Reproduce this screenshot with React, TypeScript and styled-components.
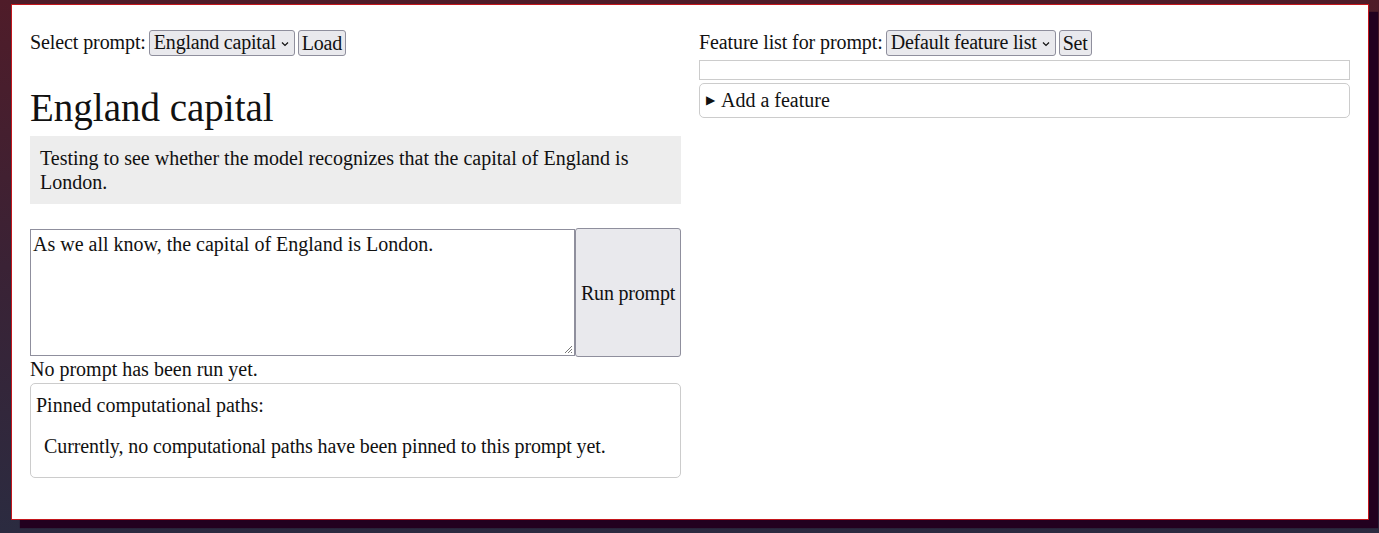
import React from "react";
import styled, { createGlobalStyle } from "styled-components";

const Global = createGlobalStyle`
  html, body { margin: 0; padding: 0; }
  body {
    min-height: 533px;
    background: linear-gradient(180deg, #4f1c29 0%, #3a2235 50%, #2b2b40 100%);
    font-family: "Liberation Serif", "Times New Roman", serif;
    font-size: 20px;
    color: #111;
  }
  #root { padding: 4px 10px 0 11px; }
`;

const Card = styled.div`
  background: #fff;
  border: 1px solid #c3161c;
  box-shadow: 9px 8px 1px #22001f;
  height: 516px;
  box-sizing: border-box;
  padding: 24px 18px 18px 18px;
  display: grid;
  grid-template-columns: 1fr 1fr;
  column-gap: 18px;
  align-items: start;
`;

const Column = styled.div`
  display: flex;
  flex-direction: column;
  min-width: 0;
`;

const Toolbar = styled.div`
  display: flex;
  align-items: center;
  gap: 3px;
  height: 27px;
`;

const Label = styled.span`
  letter-spacing: -0.1px;
`;

const Select = styled.div`
  display: inline-flex;
  align-items: center;
  height: 26px;
  box-sizing: border-box;
  padding: 0 5px 0 4px;
  background: #e9e9ed;
  border: 1px solid #8f8f9d;
  border-radius: 3px;
  gap: 5px;
  white-space: nowrap;
  letter-spacing: -0.2px;
`;

const Chevron = styled.svg`
  width: 8px;
  height: 6px;
  margin-top: 2px;
`;

const Button = styled.button`
  font: inherit;
  color: inherit;
  background: #e9e9ed;
  border: 1px solid #8f8f9d;
  border-radius: 3px;
  padding: 0 3px;
  height: 26px;
  line-height: 1;
  letter-spacing: -0.2px;
`;

const Heading = styled.h1`
  font-size: 39px;
  font-weight: normal;
  margin: 31px 0 0 0;
  line-height: 42px;
`;

const Description = styled.div`
  background: #ededed;
  padding: 10px;
  line-height: 24px;
  margin-top: 7px;
`;

const PromptRow = styled.div`
  display: flex;
  margin-top: 24px;
  align-items: stretch;
`;

const TextArea = styled.div`
  flex: 1;
  height: 127px;
  box-sizing: border-box;
  border: 1px solid #8f8f9d;
  padding: 2px 2px;
  line-height: 24px;
  position: relative;
  margin: 1px 0;
`;

const Grip = styled.svg`
  position: absolute;
  right: 1px;
  bottom: 1px;
  width: 10px;
  height: 10px;
`;

const RunButton = styled(Button)`
  width: 106px;
  height: 129px;
  padding: 0;
`;

const Status = styled.div`
  line-height: 24px;
`;

const PinnedBox = styled.div`
  border: 1px solid #cccccc;
  border-radius: 5px;
  padding: 10px 5px 16px 5px;
  margin-top: 2px;
  height: 95px;
  box-sizing: border-box;
`;

const PinnedText = styled.div`
  line-height: 24px;
  padding-left: 8px;
  margin-top: 17px;
  letter-spacing: -0.1px;
`;

const FeatureInput = styled.div`
  height: 20px;
  box-sizing: border-box;
  border: 1px solid #cccccc;
  margin-top: 4px;
`;

const Details = styled.div`
  border: 1px solid #cccccc;
  border-radius: 5px;
  height: 35px;
  box-sizing: border-box;
  margin-top: 3px;
  padding: 0 6px;
  display: flex;
  align-items: center;
  gap: 6px;
`;

const Triangle = styled.span`
  font-size: 12px;
`;

const ChevronIcon = () => (
  <Chevron viewBox="0 0 8 6">
    <path d="M1 1.5 L4 4.5 L7 1.5" fill="none" stroke="#111" strokeWidth="1.2" />
  </Chevron>
);

export default function App() {
  return (
    <>
      <Global />
      <Card>
        <Column>
          <Toolbar>
            <Label>Select prompt:</Label>
            <Select>
              England capital <ChevronIcon />
            </Select>
            <Button>Load</Button>
          </Toolbar>
          <Heading>England capital</Heading>
          <Description>
            Testing to see whether the model recognizes that the capital of England is London.
          </Description>
          <PromptRow>
            <TextArea>
              As we all know, the capital of England is London.
              <Grip viewBox="0 0 10 10">
                <path d="M9 2 L2 9 M9 5 L5 9 M9 8 L8 9" stroke="#777" strokeWidth="1" />
              </Grip>
            </TextArea>
            <RunButton>Run prompt</RunButton>
          </PromptRow>
          <Status>No prompt has been run yet.</Status>
          <PinnedBox>
            Pinned computational paths:
            <PinnedText>
              Currently, no computational paths have been pinned to this prompt yet.
            </PinnedText>
          </PinnedBox>
        </Column>
        <Column>
          <Toolbar>
            <Label>Feature list for prompt:</Label>
            <Select>
              Default feature list <ChevronIcon />
            </Select>
            <Button>Set</Button>
          </Toolbar>
          <FeatureInput />
          <Details>
            <Triangle>▶</Triangle>
            Add a feature
          </Details>
        </Column>
      </Card>
    </>
  );
}
